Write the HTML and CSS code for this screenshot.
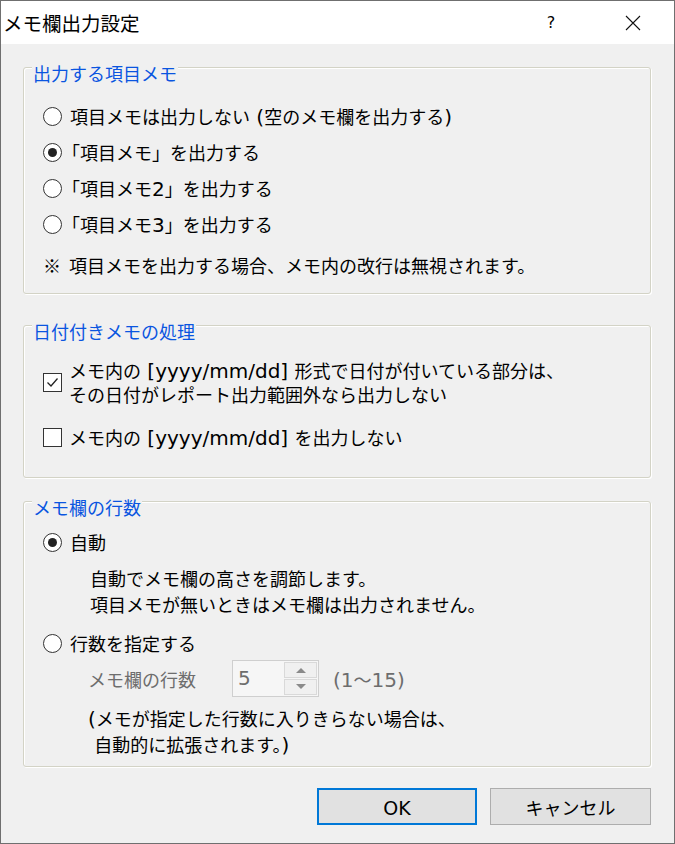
FILE: index.html
```html
<!DOCTYPE html>
<html lang="ja">
<head>
    <meta charset="UTF-8">
    <meta name="viewport" content="width=device-width, initial-scale=1.0">
    <title>メモ欄出力設定</title>
    <link rel="stylesheet" href="styles.css">
</head>
<body>
    <div class="window">
        <div class="titlebar">
            <span class="title">メモ欄出力設定</span>
            <span class="help">?</span>
            <span class="close">
                <svg width="16" height="16" viewBox="0 0 16 16"><path d="M1 1L15 15M15 1L1 15" stroke="#111" stroke-width="1.1" fill="none"/></svg>
            </span>
        </div>

        <div class="content">
            <div class="group group-output">
                <div class="legend">出力する項目メモ</div>
                <div class="opt first"><span class="radio"></span><span>項目メモは出力しない<span class="lat"> (</span>空のメモ欄を出力する<span class="lat">)</span></span></div>
                <div class="opt"><span class="radio checked"></span><span><span class="bracket">「</span>項目メモ」を出力する</span></div>
                <div class="opt"><span class="radio"></span><span><span class="bracket">「</span>項目メモ<span class="lat">2</span>」を出力する</span></div>
                <div class="opt"><span class="radio"></span><span><span class="bracket">「</span>項目メモ<span class="lat">3</span>」を出力する</span></div>
                <div class="note">※  項目メモを出力する場合、メモ内の改行は無視されます。</div>
            </div>

            <div class="group group-date">
                <div class="legend">日付付きメモの処理</div>
                <div class="check-row first">
                    <span class="checkbox">
                        <svg width="17" height="17" viewBox="0 0 17 17"><path d="M3.5 8.5L7 12L13.5 4.5" stroke="#222" stroke-width="1.3" fill="none"/></svg>
                    </span>
                    <span class="lines">メモ内の<span class="lat"> [yyyy/mm/dd] </span>形式で日付が付いている部分は、<br>その日付がレポート出力範囲外なら出力しない</span>
                </div>
                <div class="check-row second">
                    <span class="checkbox"></span>
                    <span class="lines">メモ内の<span class="lat"> [yyyy/mm/dd] </span>を出力しない</span>
                </div>
            </div>

            <div class="group group-rows">
                <div class="legend">メモ欄の行数</div>
                <div class="opt auto"><span class="radio checked"></span><span>自動</span></div>
                <div class="desc">自動でメモ欄の高さを調節します。<br>項目メモが無いときはメモ欄は出力されません。</div>
                <div class="opt manual"><span class="radio"></span><span>行数を指定する</span></div>
                <div class="spin-row">
                    <span class="spin-label">メモ欄の行数</span>
                    <span class="spin">
                        <span class="spin-value"><span class="lat">5</span></span>
                        <span class="spin-buttons">
                            <span class="spin-btn"><svg width="10" height="6" viewBox="0 0 10 6"><path d="M0 6L5 1L10 6Z" fill="#8a8a8a"/></svg></span>
                            <span class="spin-btn"><svg width="10" height="6" viewBox="0 0 10 6"><path d="M0 0L5 5L10 0Z" fill="#8a8a8a"/></svg></span>
                        </span>
                    </span>
                    <span class="spin-range"><span class="lat">(1</span>～<span class="lat">15)</span></span>
                </div>
                <div class="paren"><span class="lat">(</span>メモが指定した行数に入りきらない場合は、<br><span class="lat"> </span>自動的に拡張されます。<span class="lat">)</span></div>
            </div>

            <div class="buttons">
                <button class="btn btn-default"><span class="lat">OK</span></button>
                <button class="btn">キャンセル</button>
            </div>
        </div>
    </div>
</body>
</html>
```

FILE: styles.css
```css
body {
    margin: 0;
    padding: 0;
    background-color: #f0f0f0;
    font-family: "Noto Sans CJK JP", "DejaVu Sans", sans-serif;
    font-size: 18px;
    color: #000;
}
.lat {
    font-family: "DejaVu Sans", sans-serif;
    font-size: 20px;
    line-height: 1;
}
.window {
    width: 675px;
    height: 844px;
    box-sizing: border-box;
    border: 1px solid #6f6f6f;
    background-color: #f0f0f0;
}
.titlebar {
    height: 43px;
    background-color: #fff;
    display: flex;
    align-items: center;
}
.title {
    margin-left: 2px;
    font-size: 19.5px;
    line-height: 24px;
    flex: 1;
}
.help {
    font-family: "DejaVu Sans", sans-serif;
    font-size: 16px;
    width: 20px;
    margin-right: 64px;
    text-align: center;
}
.close {
    display: flex;
    margin-right: 33px;
}
.content {
    padding: 23px 23px 0 22px;
}
.group {
    border: 1px solid #d3d3c6;
    border-radius: 3px;
    box-shadow: inset 1px 1px 0 #fff, 1px 1px 0 #fff;
}
.legend {
    display: table;
    margin: -7px 0 0 8px;
    padding: 0 1px;
    line-height: 24px;
    color: #0a55e0;
    background-color: #f0f0f0;
}
.opt {
    display: flex;
    align-items: center;
    height: 36px;
    padding-left: 19px;
    white-space: pre;
}
.bracket {
    font-feature-settings: "halt";
    margin-left: 1px;
}
.radio {
    width: 19px;
    height: 19px;
    box-sizing: border-box;
    border: 1px solid #333;
    border-radius: 50%;
    background-color: #fff;
    margin-right: 8px;
    display: flex;
    align-items: center;
    justify-content: center;
    flex-shrink: 0;
}
.radio.checked::after {
    content: "";
    width: 9px;
    height: 9px;
    border-radius: 50%;
    background-color: #222;
}

/* 出力する項目メモ */
.group-output {
    padding-bottom: 16px;
}
.group-output .opt.first {
    margin-top: 13px;
}
.note {
    margin-top: 11px;
    padding-left: 19px;
    line-height: 24px;
    white-space: pre;
}

/* 日付付きメモの処理 */
.group-date {
    margin-top: 31px;
    padding-bottom: 28px;
}
.check-row {
    display: flex;
    align-items: center;
    padding-left: 19px;
    line-height: 24px;
}
.check-row.first {
    margin-top: 15px;
}
.check-row.second {
    margin-top: 19px;
}
.checkbox {
    width: 19px;
    height: 19px;
    box-sizing: border-box;
    border: 1px solid #333;
    background-color: #fff;
    margin-right: 7px;
    display: flex;
    align-items: center;
    justify-content: center;
    flex-shrink: 0;
}

/* メモ欄の行数 */
.group-rows {
    margin-top: 23px;
    padding-bottom: 9px;
}
.opt.auto {
    margin-top: 5px;
}
.desc {
    margin-top: 5px;
    padding-left: 66px;
    line-height: 26px;
}
.opt.manual {
    margin-top: 8px;
}
.spin-row {
    display: flex;
    align-items: center;
    height: 37px;
    margin-top: -1px;
    padding-left: 64px;
    color: #6d6d6d;
}
.spin-label {
    width: 144px;
}
.spin {
    display: flex;
    width: 87px;
    height: 37px;
    box-sizing: border-box;
    border: 1px solid #cfcfcf;
    background-color: #f6f6f6;
}
.spin-value {
    flex: 1;
    padding-left: 5px;
    line-height: 33px;
}
.spin-buttons {
    display: flex;
    flex-direction: column;
    gap: 1px;
    padding: 1px 1px 1px 0;
}
.spin-btn {
    width: 33px;
    flex: 1;
    box-sizing: border-box;
    border: 1px solid #d9d9d9;
    background-color: #f0f0f0;
    display: flex;
    align-items: center;
    justify-content: center;
}
.spin-range {
    margin-left: 14px;
}
.paren {
    margin-top: 8px;
    padding-left: 64px;
    line-height: 26px;
    white-space: pre;
}

/* buttons */
.buttons {
    display: flex;
    justify-content: flex-end;
    gap: 13px;
    margin-top: 21px;
}
.btn {
    width: 161px;
    height: 37px;
    box-sizing: border-box;
    border: 1px solid #adadad;
    background-color: #e1e1e1;
    font-family: "Noto Sans CJK JP", "DejaVu Sans", sans-serif;
    font-size: 18px;
    line-height: 24px;
    color: #000;
    padding: 0;
}
.btn-default {
    width: 160px;
    border: 2px solid #0078d7;
}
.btn .lat {
    font-size: 19px;
}
```
